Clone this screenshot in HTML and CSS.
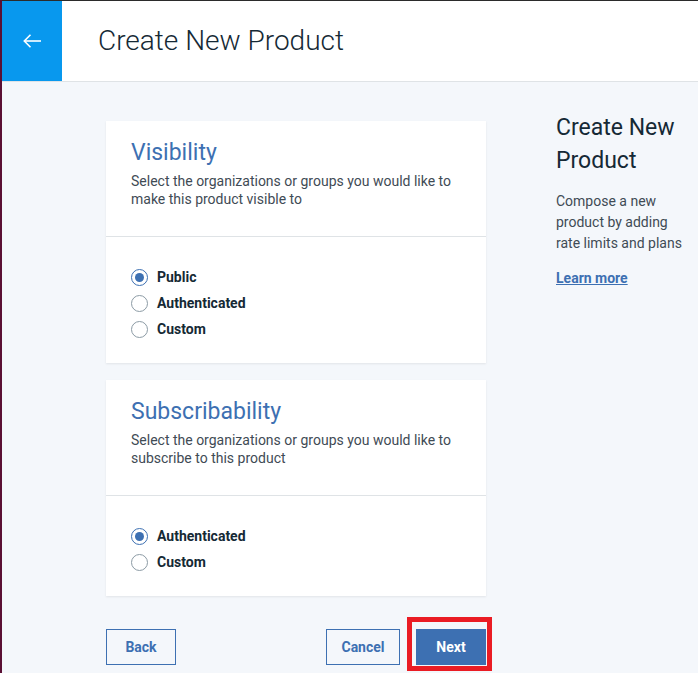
FILE: index.html
```html
<!DOCTYPE html>
<html lang="en">
<head>
<meta charset="utf-8">
<title>Create New Product</title>
<link rel="stylesheet" href="styles.css">
</head>
<body>
<div class="frame">
  <header class="topbar">
    <button class="back-btn" aria-label="Back">
      <svg width="20" height="16" viewBox="0 0 20 16" fill="none" stroke="#fff" stroke-width="1.6">
        <path d="M19 8H2.5"/>
        <path d="M8.5 1.8L2.3 8l6.2 6.2"/>
      </svg>
    </button>
    <h1 class="page-title">Create New Product</h1>
  </header>
  <main class="main">
    <div class="content">
      <section class="card">
        <div class="card-head">
          <h2 class="card-title">Visibility</h2>
          <p class="card-desc">Select the organizations or groups you would like to make this product visible to</p>
        </div>
        <div class="card-body">
          <label class="radio"><span class="dot checked"></span>Public</label>
          <label class="radio"><span class="dot"></span>Authenticated</label>
          <label class="radio"><span class="dot"></span>Custom</label>
        </div>
      </section>
      <section class="card">
        <div class="card-head">
          <h2 class="card-title">Subscribability</h2>
          <p class="card-desc">Select the organizations or groups you would like to subscribe to this product</p>
        </div>
        <div class="card-body">
          <label class="radio"><span class="dot checked"></span>Authenticated</label>
          <label class="radio"><span class="dot"></span>Custom</label>
        </div>
      </section>
      <div class="actions">
        <button class="btn btn-back">Back</button>
        <div class="actions-right">
          <button class="btn btn-cancel">Cancel</button>
          <div class="next-wrap">
            <button class="btn btn-primary">Next</button>
            <span class="highlight"></span>
          </div>
        </div>
      </div>
    </div>
    <aside class="side">
      <h3 class="side-title">Create New Product</h3>
      <p class="side-desc">Compose a new product by adding rate limits and plans</p>
      <a class="side-link" href="#">Learn more</a>
    </aside>
  </main>
</div>
</body>
</html>
```
FILE: styles.css
```css
* { box-sizing: border-box; }
html, body { margin: 0; padding: 0; height: 100%; }
body {
  font-family: "Roboto", "Liberation Sans", sans-serif;
  color: #152935;
  background: #5a1034;
}
.frame {
  margin-left: 2px;
  border-top: 1px solid #2b2b2b;
  min-height: 100%;
  background: #f4f7fb;
  display: flex;
  flex-direction: column;
}
.topbar {
  height: 81px;
  background: #fff;
  border-bottom: 1px solid #dfe3e6;
  display: flex;
  align-items: stretch;
}
.back-btn {
  width: 60px;
  height: 80px;
  border: 0;
  padding: 0;
  background: #0898ee;
  display: flex;
  align-items: center;
  justify-content: center;
}
.page-title {
  margin: 0 0 0 36px;
  font-weight: 300;
  font-size: 28px;
  align-self: center;
  color: #152935;
  padding-bottom: 2px;
}
.main {
  flex: 1;
  display: flex;
  padding: 29px 0 0 104px;
  gap: 70px;
}
.content {
  width: 380px;
  padding-top: 10px;
  display: flex;
  flex-direction: column;
  gap: 17px;
}
.card {
  background: #fff;
  box-shadow: 0 1px 2px rgba(0,0,0,0.08);
}
.card-head {
  padding: 18px 25px 28px;
  border-bottom: 1px solid #dfe3e6;
}
.card-title {
  margin: 0;
  font-weight: 400;
  font-size: 23px;
  line-height: 28px;
  color: #3d70b2;
}
.card-desc {
  margin: 5px 0 0;
  font-size: 14px;
  line-height: 18px;
  color: #3f4b55;
}
.card-body {
  padding: 27px 25px 21px;
  display: flex;
  flex-direction: column;
}
.radio {
  display: flex;
  align-items: center;
  height: 26px;
  font-size: 14px;
  font-weight: 700;
  color: #152935;
}
.dot {
  width: 17px;
  height: 17px;
  border-radius: 50%;
  border: 1px solid #8c9ba5;
  margin-right: 9px;
  display: flex;
  align-items: center;
  justify-content: center;
  background: #fff;
}
.dot.checked { border-color: #3d70b2; }
.dot.checked::after {
  content: "";
  width: 9px;
  height: 9px;
  border-radius: 50%;
  background: #3d70b2;
}
.actions {
  margin-top: 16px;
  display: flex;
  justify-content: space-between;
}
.actions-right {
  display: flex;
  gap: 16px;
}
.btn {
  height: 36px;
  padding: 0;
  font-family: inherit;
  font-size: 14px;
  font-weight: 700;
  color: #3d70b2;
  background: transparent;
  border: 1px solid #3d70b2;
}
.btn-back { width: 70px; }
.btn-cancel { width: 74px; }
.btn-primary {
  background: #3d70b2;
  color: #fff;
  width: 70px;
}
.next-wrap { position: relative; }
.highlight {
  position: absolute;
  left: -9px;
  top: -12px;
  right: -6px;
  bottom: -6px;
  border: 5px solid #ea1c24;
}
.side {
  width: 134px;
}
.side-title {
  margin: 0;
  font-weight: 400;
  font-size: 23px;
  line-height: 33px;
  color: #152935;
}
.side-desc {
  margin: 14px 0 0;
  font-size: 14px;
  line-height: 21px;
  color: #3f4b55;
}
.side-link {
  display: inline-block;
  margin-top: 16px;
  font-size: 14px;
  font-weight: 700;
  color: #3d70b2;
}
```
